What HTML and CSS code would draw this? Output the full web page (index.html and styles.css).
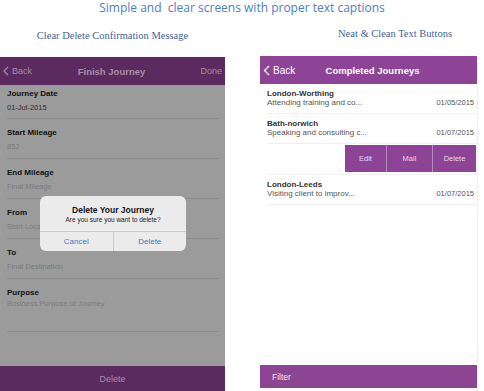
FILE: index.html
```html
<!DOCTYPE html>
<html lang="en">
<head>
    <meta charset="UTF-8">
    <title>Journey Screens</title>
    <link rel="stylesheet" href="styles.css">
</head>
<body>
    <div class="headline">Simple and&nbsp; clear screens with proper text captions</div>

    <div class="columns">
        <div class="col left-col">
            <div class="caption">Clear Delete Confirmation Message</div>
            <div class="screen dim">
                <div class="topbar dark">
                    <span class="back">
                        <svg width="6" height="10" viewBox="0 0 6 10"><polyline points="5,1 1,5 5,9" fill="none" stroke="currentColor" stroke-width="1.2"/></svg>
                        Back
                    </span>
                    <span class="title">Finish Journey</span>
                    <span class="done">Done</span>
                </div>
                <div class="form">
                    <div class="field first">
                        <div class="label">Journey Date</div>
                        <div class="value strong">01-Jul-2015</div>
                    </div>
                    <div class="field">
                        <div class="label">Start Mileage</div>
                        <div class="value">852</div>
                    </div>
                    <div class="field">
                        <div class="label">End Mileage</div>
                        <div class="value">Final Mileage</div>
                    </div>
                    <div class="field">
                        <div class="label">From</div>
                        <div class="value">Start Location</div>
                    </div>
                    <div class="field">
                        <div class="label">To</div>
                        <div class="value">Final Destination</div>
                    </div>
                    <div class="field tall">
                        <div class="label">Purpose</div>
                        <div class="value">Business Purpose of Journey</div>
                    </div>

                    <div class="dialog">
                        <div class="dialog-text">
                            <div class="dialog-title">Delete Your Journey</div>
                            <div class="dialog-msg">Are you sure you want to delete?</div>
                        </div>
                        <div class="dialog-buttons">
                            <span>Cancel</span>
                            <span>Delete</span>
                        </div>
                    </div>
                </div>
                <div class="bottombar dark">Delete</div>
            </div>
        </div>

        <div class="col right-col">
            <div class="caption">Neat &amp; Clean Text Buttons</div>
            <div class="screen light">
                <div class="topbar purple">
                    <span class="back">
                        <svg width="7" height="11" viewBox="0 0 7 11"><polyline points="6,1 1.5,5.5 6,10" fill="none" stroke="currentColor" stroke-width="1.3"/></svg>
                        Back
                    </span>
                    <span class="title">Completed Journeys</span>
                    <span class="done"></span>
                </div>
                <div class="list">
                    <div class="item">
                        <div class="item-title">London-Worthing</div>
                        <div class="item-line"><span>Attending training and co...</span><span>01/05/2015</span></div>
                    </div>
                    <div class="item">
                        <div class="item-title">Bath-norwich</div>
                        <div class="item-line"><span>Speaking and consulting c...</span><span>01/07/2015</span></div>
                    </div>
                    <div class="item swiped">
                        <div class="actions">
                            <span class="edit">Edit</span>
                            <span class="mail">Mail</span>
                            <span class="del">Delete</span>
                        </div>
                    </div>
                    <div class="item">
                        <div class="item-title">London-Leeds</div>
                        <div class="item-line"><span>Visiting client to improv...</span><span>01/07/2015</span></div>
                    </div>
                </div>
                <div class="filterbar">Filter</div>
            </div>
        </div>
    </div>
</body>
</html>
```

FILE: styles.css
```css
body {
    margin: 0;
    width: 484px;
    height: 391px;
    overflow: hidden;
    background: #ffffff;
    font-family: 'Liberation Sans', Arial, sans-serif;
}

.headline {
    height: 14px;
    line-height: 15px;
    text-align: center;
    font-family: 'Open Sans', sans-serif;
    font-size: 12px;
    color: #4b7ec4;
    white-space: pre;
}

.columns {
    display: flex;
}

.caption {
    font-family: 'Liberation Serif', serif;
    font-size: 10.5px;
    color: #3e5f9e;
    line-height: 12px;
}

.left-col {
    width: 225px;
}

.left-col .caption {
    height: 43px;
    padding-top: 16px;
    box-sizing: border-box;
    text-align: center;
}

.right-col {
    width: 218px;
    margin-left: 35px;
}

.right-col .caption {
    height: 42px;
    padding-top: 14px;
    padding-left: 78px;
    box-sizing: border-box;
}

.screen {
    display: flex;
    flex-direction: column;
}

.left-col .screen {
    height: 334px;
}

.right-col .screen {
    height: 335px;
    border-right: 1px solid #f0f0f0;
}

/* bars */
.topbar {
    height: 28px;
    display: flex;
    align-items: center;
    justify-content: space-between;
    font-size: 9px;
    padding: 0 3px;
    box-sizing: border-box;
}

.topbar .back {
    display: flex;
    align-items: center;
    gap: 3px;
    width: 40px;
}

.topbar .title {
    font-weight: bold;
}

.topbar .done {
    width: 40px;
    text-align: right;
}

.dark {
    background: #5b2a5e;
    color: #a88ca9;
}

.dark .title {
    font-size: 9.5px;
    margin-left: -2px;
}

.purple {
    background: #8e4496;
    color: #ffffff;
}

.purple .back {
    font-size: 10px;
}

.purple .title {
    font-size: 9.5px;
    margin-left: 8px;
}

.bottombar {
    height: 25px;
    display: flex;
    align-items: center;
    justify-content: center;
    font-size: 9px;
}

/* dimmed form */
.form {
    flex: 1;
    background: #9b9b9b;
    position: relative;
}

.field {
    margin: 0 7px;
    padding: 8px 0 6px;
    border-bottom: 1px solid #8a8a8a;
}

.field.first {
    padding: 3px 0 5px;
}

.field.tall {
    padding-bottom: 22px;
}

.field.tall .value {
    margin-top: 0;
}

.label {
    font-size: 8px;
    line-height: 11px;
    font-weight: bold;
    color: #111111;
}

.value {
    font-size: 7.5px;
    line-height: 11px;
    margin-top: 3px;
    color: #7c7c7c;
}

.value.strong {
    color: #2e2e2e;
}

.dialog {
    position: absolute;
    left: 40px;
    top: 111px;
    width: 146px;
    height: 55px;
    background: #ebebeb;
    border-radius: 6px;
    display: flex;
    flex-direction: column;
    text-align: center;
}

.dialog-text {
    height: 36px;
    padding-top: 9px;
    box-sizing: border-box;
    border-bottom: 1px solid #c9c9c9;
}

.dialog-title {
    font-size: 8.5px;
    line-height: 10px;
    font-weight: bold;
    color: #151515;
}

.dialog-msg {
    font-size: 6.5px;
    line-height: 9px;
    color: #222222;
}

.dialog-buttons {
    flex: 1;
    display: flex;
}

.dialog-buttons span {
    flex: 1;
    display: flex;
    align-items: center;
    justify-content: center;
    font-size: 8px;
    color: #3a7ad0;
}

.dialog-buttons span + span {
    border-left: 1px solid #c9c9c9;
}

/* list */
.list {
    flex: 1;
    background: #ffffff;
}

.item {
    margin-left: 7px;
    padding: 5px 3px 5px 0;
    border-bottom: 1px solid #f0f0f0;
}

.item-title {
    font-size: 8px;
    line-height: 9px;
    font-weight: bold;
    color: #333333;
}

.item-line {
    display: flex;
    justify-content: space-between;
    font-size: 8px;
    line-height: 10px;
    color: #555555;
}

.item-line span:last-child {
    font-size: 7.5px;
}

.item.swiped {
    padding: 1px 0 2px;
    display: flex;
    justify-content: flex-end;
}

.actions {
    display: flex;
    height: 27px;
    background: #8e4496;
    color: #ecd6ee;
    font-size: 7.5px;
    margin-right: 1px;
}

.actions span {
    display: flex;
    align-items: center;
    justify-content: center;
}

.actions .edit {
    width: 41px;
}

.actions .mail {
    width: 45px;
    border-left: 1px solid #b88cbd;
    border-right: 1px solid #b88cbd;
}

.actions .del {
    width: 43px;
}

.filterbar {
    height: 23px;
    margin-bottom: 3px;
    background: #8b4593;
    color: #f2e6f3;
    font-size: 8.5px;
    display: flex;
    align-items: center;
    padding-left: 12px;
}
```
